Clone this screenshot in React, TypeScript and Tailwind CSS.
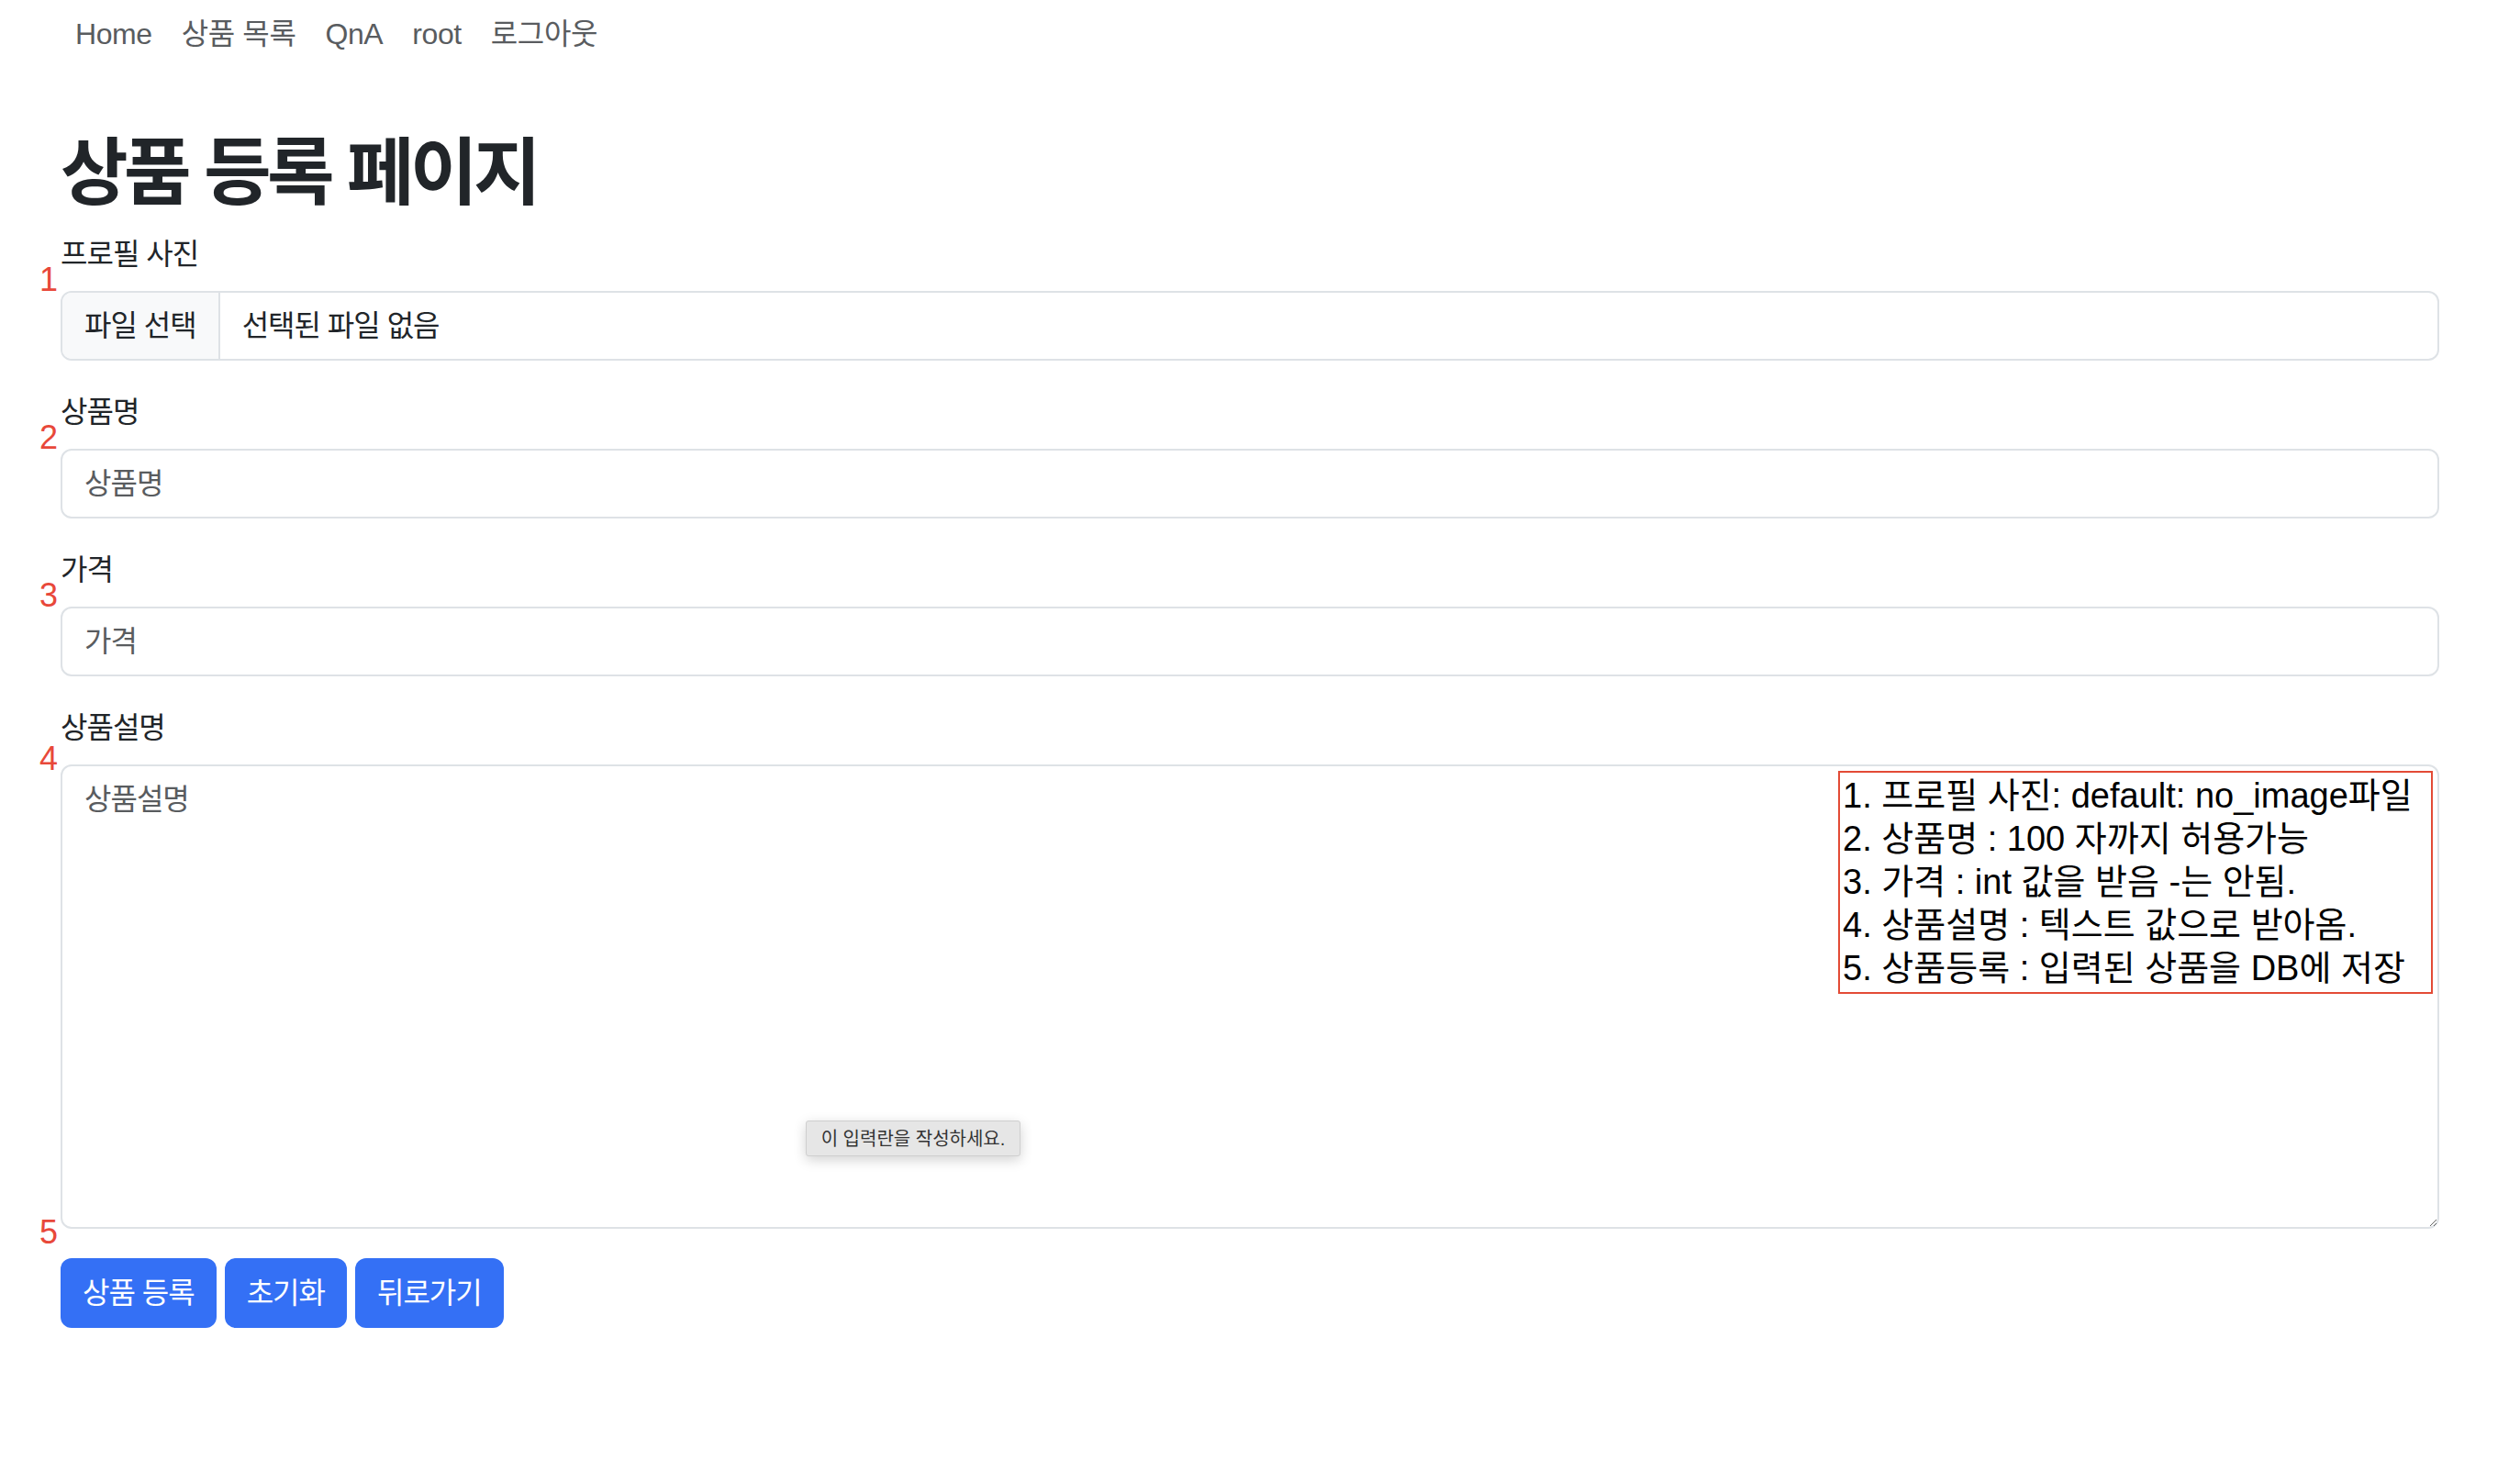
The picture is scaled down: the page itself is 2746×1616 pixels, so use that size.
import React from "react";

const font = "font-['Liberation_Sans','Noto_Sans_CJK_KR',sans-serif]";

const navItems = ["Home", "상품 목록", "QnA", "root", "로그아웃"];

const notes = [
  "1. 프로필 사진: default: no_image파일",
  "2. 상품명 : 100 자까지 허용가능",
  "3. 가격 : int 값을 받음 -는 안됨.",
  "4. 상품설명 : 텍스트 값으로 받아옴.",
  "5. 상품등록 : 입력된 상품을 DB에 저장",
];

function Num({ n, top = "top-[34px]" }: { n: string; top?: string }) {
  return (
    <span className={`absolute left-[-23px] ${top} text-[36px] leading-none tracking-normal text-[#e8483a]`}>
      {n}
    </span>
  );
}

export default function App() {
  return (
    <div className={`relative min-h-[1616px] w-full bg-white text-[#212529] tracking-[-1px] ${font}`}>
      <div className="w-[2658px] pl-[66px]">
        {/* nav */}
        <nav className="flex flex-row items-center tracking-[-0.4px]">
          {navItems.map((item) => (
            <a key={item} className="px-4 py-[13px] text-[32px] leading-[48px] text-[#595c5f]">
              {item}
            </a>
          ))}
        </nav>

        <h1 className="mt-[67px] mb-4 text-[80px] font-semibold leading-[96px] tracking-[-4.5px]">
          상품 등록 페이지
        </h1>

        <form>
          {/* 프로필 사진 */}
          <div className="relative mb-8">
            <label className="mb-4 block text-[32px] leading-[48px]">프로필 사진</label>
            <Num n="1" />
            <div className="flex h-[76px] w-[2592px] flex-row overflow-hidden rounded-[12px] border-2 border-[#dee2e6]">
              <div className="flex items-center border-r-2 border-[#dee2e6] bg-[#f8f9fa] px-6 text-[32px]">
                파일 선택
              </div>
              <div className="flex items-center px-6 text-[32px]">선택된 파일 없음</div>
            </div>
          </div>

          {/* 상품명 */}
          <div className="relative mb-8">
            <label className="mb-4 block text-[32px] leading-[48px]">상품명</label>
            <Num n="2" />
            <input
              placeholder="상품명"
              className="block h-[76px] w-[2592px] rounded-[12px] border-2 border-[#dee2e6] px-6 text-[32px] outline-none placeholder:text-[#595c5f]"
            />
          </div>

          {/* 가격 */}
          <div className="relative mb-8">
            <label className="mb-4 block text-[32px] leading-[48px]">가격</label>
            <Num n="3" />
            <input
              placeholder="가격"
              className="block h-[76px] w-[2592px] rounded-[12px] border-2 border-[#dee2e6] px-6 text-[32px] outline-none placeholder:text-[#595c5f]"
            />
          </div>

          {/* 상품설명 */}
          <div className="relative mb-8">
            <label className="mb-4 block text-[32px] leading-[48px]">상품설명</label>
            <Num n="4" top="top-[40px]" />
            <textarea
              placeholder="상품설명"
              className="block h-[506px] w-[2592px] rounded-[12px] border-2 border-[#dee2e6] px-6 py-3 text-[32px] leading-[48px] outline-none placeholder:text-[#595c5f]"
            />
          </div>

          {/* buttons */}
          <div className="relative flex flex-row gap-[9px]">
            <Num n="5" top="top-[-46px]" />
            <button type="button" className="h-[76px] rounded-[12px] bg-[#3470f5] px-6 text-[32px] text-white">
              상품 등록
            </button>
            <button type="button" className="h-[76px] rounded-[12px] bg-[#3470f5] px-6 text-[32px] text-white">
              초기화
            </button>
            <button type="button" className="h-[76px] rounded-[12px] bg-[#3470f5] px-6 text-[32px] text-white">
              뒤로가기
            </button>
          </div>
        </form>
      </div>

      {/* annotation box */}
      <div className="absolute left-[2003px] top-[840px] h-[243px] w-[648px] border-2 border-[#e34b36] bg-white pl-[3px] pt-[2px] tracking-normal">
        {notes.map((n) => (
          <div key={n} className="whitespace-nowrap text-[38px] leading-[47px] text-black">
            {n}
          </div>
        ))}
      </div>

      {/* validation tooltip */}
      <div className="absolute left-[878px] top-[1221px] flex h-[39px] w-[234px] items-center justify-center rounded-[3px] border border-[#cfcfcf] bg-[#e6e6e6] text-[20px] tracking-normal text-[#333] shadow-[0_4px_14px_rgba(0,0,0,0.18)]">
        이 입력란을 작성하세요.
      </div>
    </div>
  );
}
